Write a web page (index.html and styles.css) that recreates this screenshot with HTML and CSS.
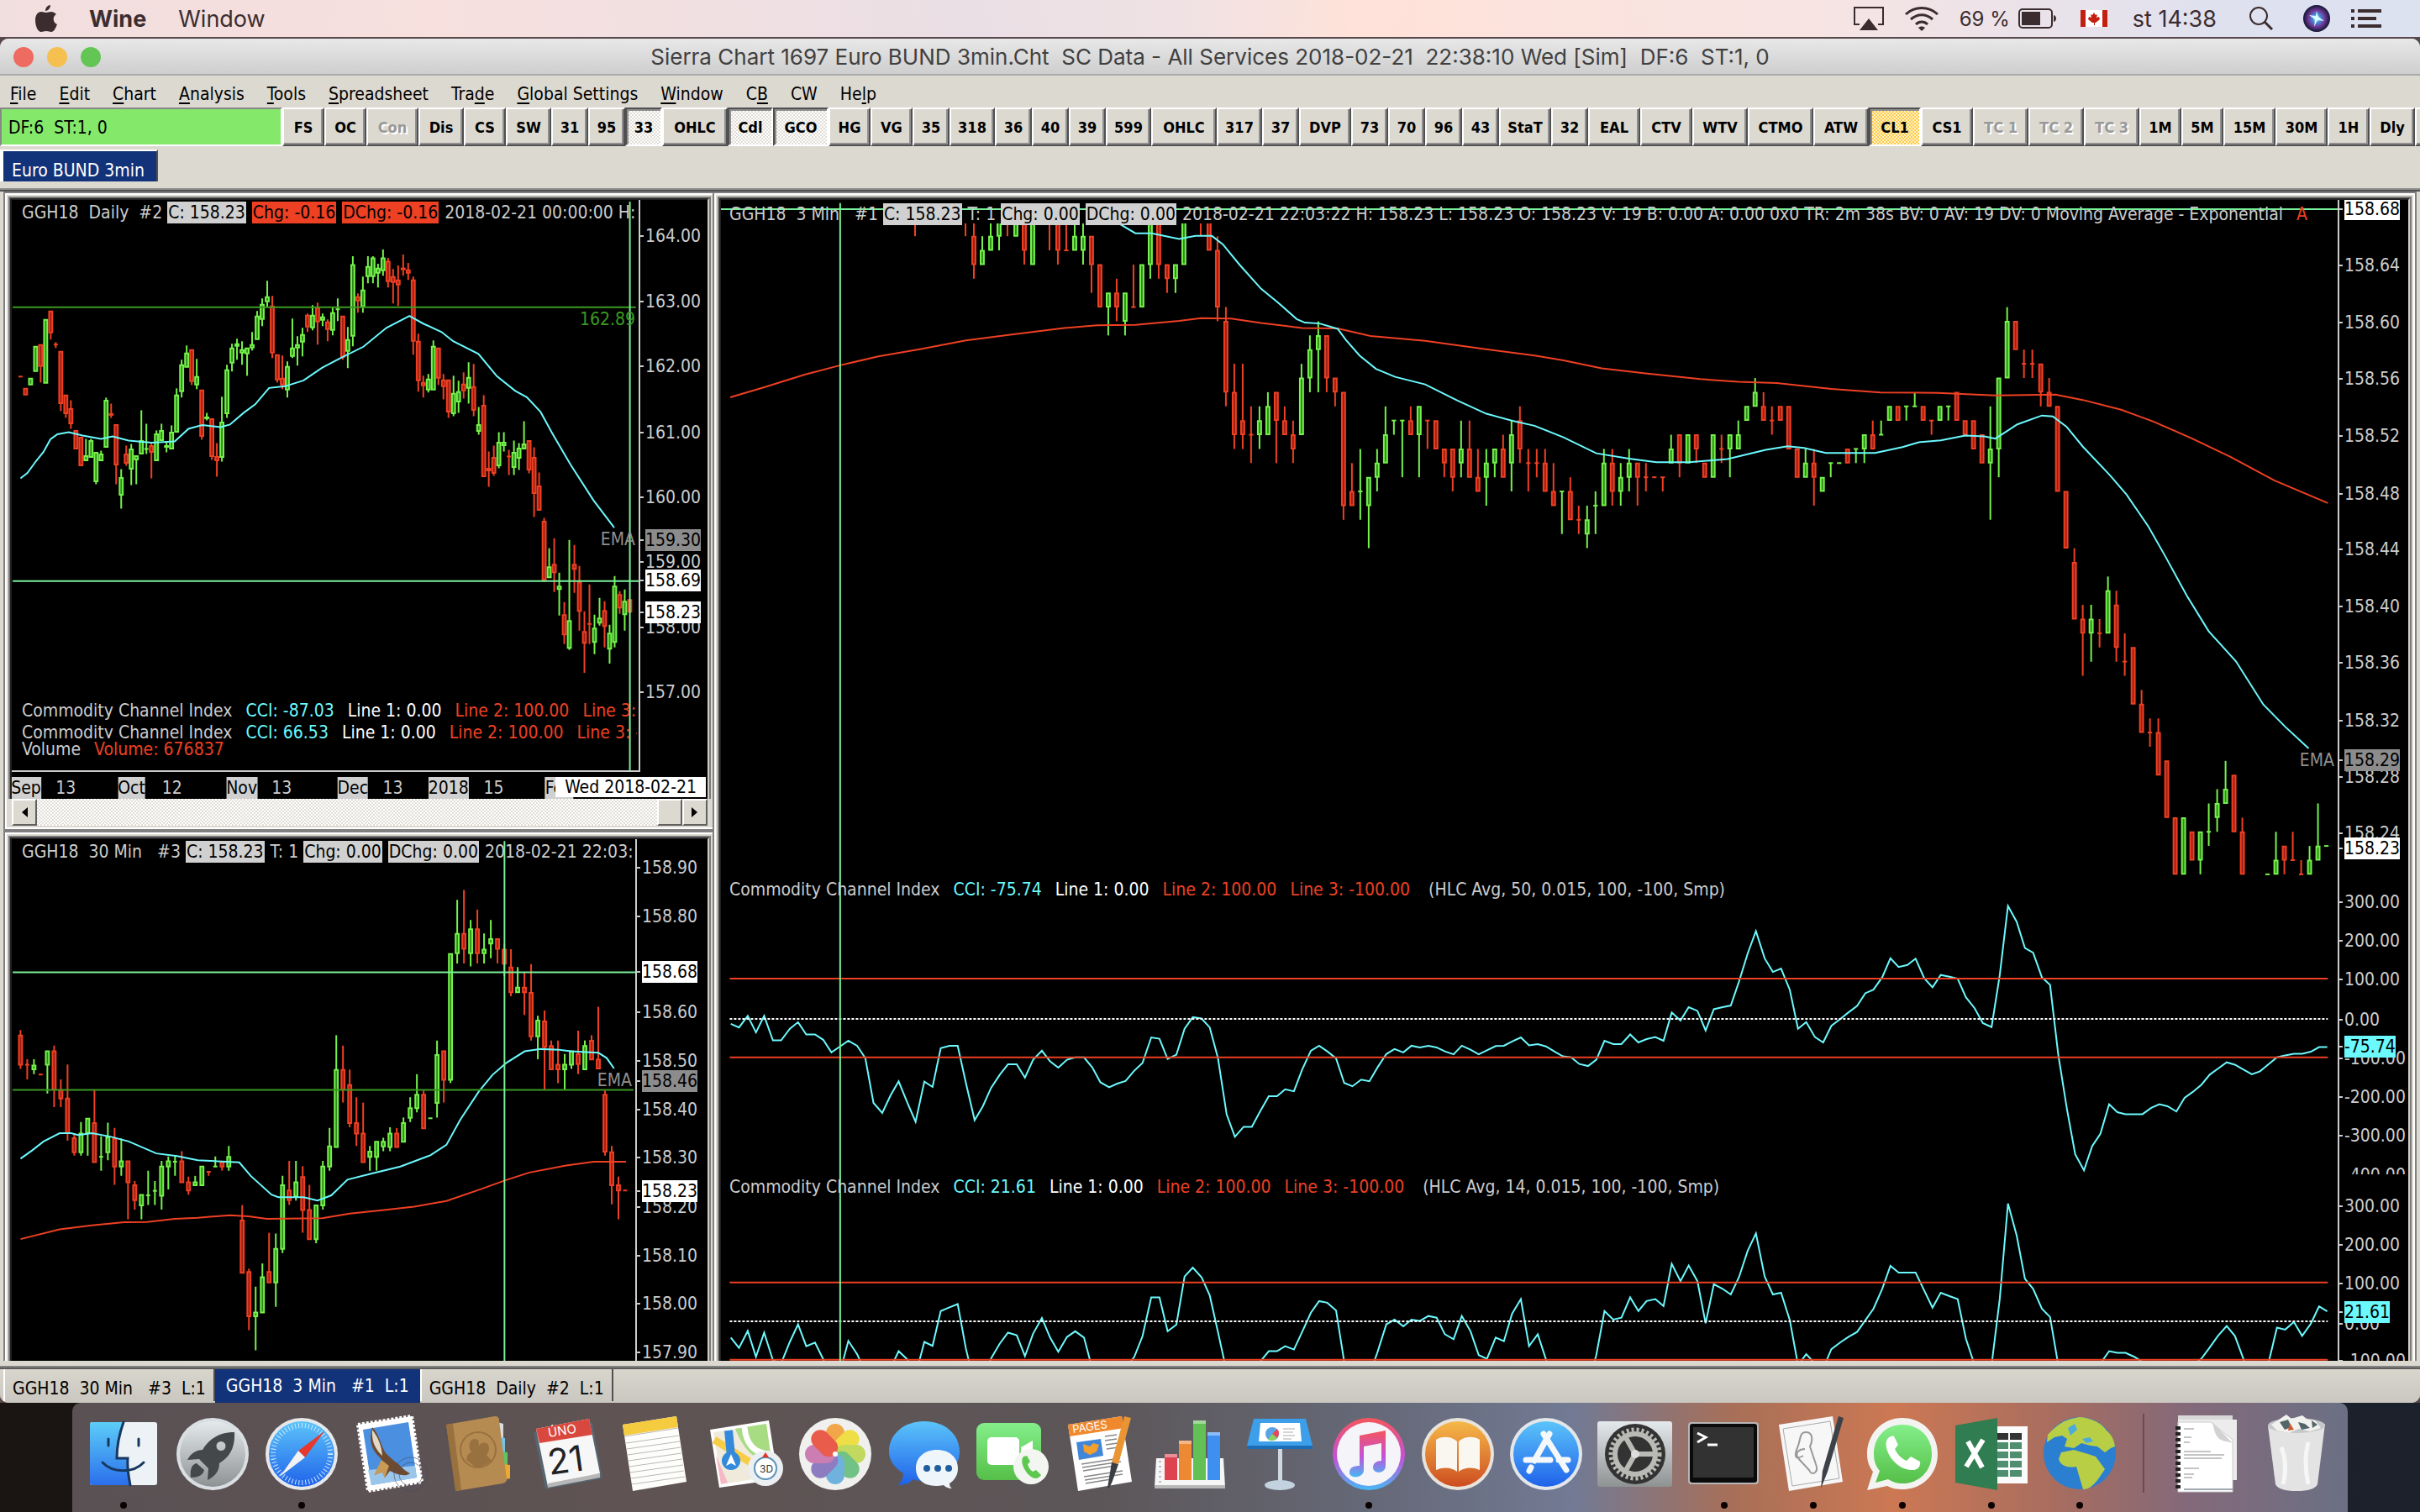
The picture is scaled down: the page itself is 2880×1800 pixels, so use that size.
FILE: index.html
```html
<!DOCTYPE html>
<html lang="en">
<head>
    <meta charset="UTF-8">
    <meta name="viewport" content="width=device-width, initial-scale=1.0">
    <title>Sierra Chart 1697 Euro BUND 3min.Cht</title>
    <link rel="stylesheet" href="styles.css">
</head>
<body>
    <!-- System menu bar -->
    <header class="menubar">
        <button class="apple" aria-label="Apple menu">
            <svg width="26" height="32" viewBox="0 0 26 32"><path d="M18 0c0 4-3 7-6 7 0-4 3-7 6-7zM13 9c2 0 3-1 6-1 2 0 4 1 6 3-5 3-4 10 1 12-2 5-4 9-7 9-2 0-3-1-6-1s-4 1-6 1C3 32 0 25 0 18 0 12 3 8 7 8c3 0 4 1 6 1z"/></svg>
        </button>
        <button class="app-name">Wine</button>
        <button>Window</button>
        <div class="status">
            <svg width="36" height="30" viewBox="0 0 36 30"><path class="line" d="M7 22H1V2h34v20h-6"/><path d="M18 15l11 14H7z"/></svg>
            <svg width="42" height="30" viewBox="0 0 42 30"><path class="line thick" d="M2 10c11-10 27-10 38 0M8 16c8-7 18-7 26 0M14 22c4-4 10-4 14 0"/><path d="M21 30l-4-4c2-2 6-2 8 0z"/></svg>
            <span class="charge">69 %</span>
            <svg width="46" height="26" viewBox="0 0 46 26"><rect class="line" x="1" y="2" width="39" height="22" rx="4"/><rect x="4" y="5" width="22" height="16"/><path d="M42 9c4 1 4 7 0 8z"/></svg>
            <svg class="flag" width="32" height="20" viewBox="0 0 32 20"><rect width="32" height="20" fill="#fff"/><path fill="#c3200f" d="M0 0h6v20H0zM26 0h6v20h-6zM16 3l2 3 2-1-1 4 3-1 1 3-5 4h-1v3h-1v-3h-2l-5-4 1-3 3 1-1-4 2 1z"/></svg>
            <span class="clock">st 14:38</span>
            <svg class="find" width="30" height="30" viewBox="0 0 30 30"><circle class="line" cx="12" cy="12" r="10"/><path class="line thick" d="M19 19l9 9"/></svg>
            <svg width="34" height="34" viewBox="0 0 34 34"><defs><radialGradient id="siri"><stop offset="0" stop-color="#e8ffff"/><stop offset=".3" stop-color="#3f8fd8"/><stop offset=".6" stop-color="#713a9c"/><stop offset="1" stop-color="#10152f"/></radialGradient></defs><circle cx="17" cy="17" r="16" fill="url(#siri)"/><path d="M17 8l2 7 7 5-8-1-4 8 1-9-7-5 8 1z" fill="#d8fbff"/></svg>
            <svg width="36" height="22" viewBox="0 0 36 22"><path d="M0 0h4v4H0zM8 0h28v4H8zM0 9h4v4H0zM8 9h22v4H8zM0 18h4v4H0zM8 18h28v4H8z"/></svg>
        </div>
    </header>

    <main class="window">
        <div class="titlebar">
            <div class="lights"><button class="red" aria-label="Close"></button><button class="yellow" aria-label="Minimize"></button><button class="green" aria-label="Zoom"></button></div>
            <h1>Sierra Chart 1697 Euro BUND 3min.Cht&nbsp; SC Data - All Services 2018-02-21&nbsp; 22:38:10 Wed [Sim]&nbsp; DF:6&nbsp; ST:1, 0</h1>
        </div>

        <nav class="menu">
            <button><u>F</u>ile</button>
            <button><u>E</u>dit</button>
            <button><u>C</u>hart</button>
            <button><u>A</u>nalysis</button>
            <button><u>T</u>ools</button>
            <button><u>S</u>preadsheet</button>
            <button>Tra<u>d</u>e</button>
            <button><u>G</u>lobal Settings</button>
            <button><u>W</u>indow</button>
            <button>C<u>B</u></button>
            <button>CW</button>
            <button>He<u>l</u>p</button>
        </nav>

        <div class="toolbar">
            <div class="feed">DF:6&nbsp; ST:1, 0</div>
            <div class="tools" id="tools"></div>
        </div>

        <div class="books"><button class="book">Euro BUND 3min</button></div>

        <div class="workspace">
            <div class="side">
                <!-- #2 daily -->
                <section class="pane daily">
                    <div class="chart">
                        <div class="row">
                            <div class="plot" id="daily"></div>
                            <div class="axis" id="daily-axis"></div>
                            <p class="legend">GGH18&nbsp; Daily&nbsp; #2 <b class="tag">C: 158.23</b> <b class="tag down">Chg: -0.16</b> <b class="tag down">DChg: -0.16</b> 2018-02-21 00:00:00 H:</p>
                            <div class="studies">
                                <p>Commodity Channel Index&nbsp; <b class="cyan">CCI: -87.03</b>&nbsp; <b class="white">Line 1: 0.00</b>&nbsp; <b class="red-text">Line 2: 100.00</b>&nbsp; <b class="red-text">Line 3: -100.00</b></p>
                                <p class="short">Commodity Channel Index&nbsp; <b class="cyan">CCI: 66.53</b>&nbsp; <b class="white">Line 1: 0.00</b>&nbsp; <b class="red-text">Line 2: 100.00</b>&nbsp; <b class="red-text">Line 3: -100.00</b></p>
                                <p>Volume&nbsp; <b class="red-text">Volume: 676837</b></p>
                            </div>
                        </div>
                        <div class="dates" id="dates"></div>
                    </div>
                    <div class="scroll">
                        <button aria-label="Scroll left"><svg width="8" height="12" viewBox="0 0 8 12"><path d="M8 0v12L1 6z"/></svg></button>
                        <span class="thumb"></span>
                        <button aria-label="Scroll right"><svg width="8" height="12" viewBox="0 0 8 12"><path d="M0 0v12l7-6z"/></svg></button>
                    </div>
                </section>

                <!-- #3 30 min -->
                <section class="pane half cut">
                    <div class="chart">
                        <div class="row">
                            <div class="plot" id="half"></div>
                            <div class="axis" id="half-axis"></div>
                            <p class="legend">GGH18&nbsp; 30 Min&nbsp;&nbsp; #3 <b class="tag">C: 158.23</b> T: 1 <b class="tag">Chg: 0.00</b> <b class="tag">DChg: 0.00</b> 2018-02-21 22:03:</p>
                        </div>
                    </div>
                </section>
            </div>

            <!-- #1 3 min -->
            <section class="pane three cut">
                <div class="chart">
                    <div class="row price">
                        <div class="plot" id="three"></div>
                        <div class="axis" id="three-axis"></div>
                        <p class="legend">GGH18&nbsp; 3 Min&nbsp;&nbsp; #1 <b class="tag">C: 158.23</b> T: 1 <b class="tag">Chg: 0.00</b> <b class="tag">DChg: 0.00</b> 2018-02-21 22:03:22 H: 158.23 L: 158.23 O: 158.23 V: 19 B: 0.00 A: 0.00 0x0 TR: 2m 38s BV: 0 AV: 19 DV: 0 Moving Average - Exponential&nbsp; <b class="red-text">A</b></p>
                    </div>
                    <div class="row cci-slow">
                        <div class="plot" id="slow"></div>
                        <div class="axis" id="slow-axis"></div>
                        <p class="legend">Commodity Channel Index&nbsp; <b class="cyan">CCI: -75.74</b>&nbsp; <b class="white">Line 1: 0.00</b>&nbsp; <b class="red-text">Line 2: 100.00</b>&nbsp; <b class="red-text">Line 3: -100.00</b>&nbsp;&nbsp; <b>(HLC Avg, 50, 0.015, 100, -100, Smp)</b></p>
                    </div>
                    <div class="row cci-fast">
                        <div class="plot" id="fast"></div>
                        <div class="axis" id="fast-axis"></div>
                        <p class="legend">Commodity Channel Index&nbsp; <b class="cyan">CCI: 21.61</b>&nbsp; <b class="white">Line 1: 0.00</b>&nbsp; <b class="red-text">Line 2: 100.00</b>&nbsp; <b class="red-text">Line 3: -100.00</b>&nbsp;&nbsp; <b>(HLC Avg, 14, 0.015, 100, -100, Smp)</b></p>
                    </div>
                </div>
            </section>
        </div>

        <footer class="tabs">
            <button>GGH18&nbsp; 30 Min&nbsp;&nbsp; #3&nbsp; L:1</button>
            <button class="active">GGH18&nbsp; 3 Min&nbsp;&nbsp; #1&nbsp; L:1</button>
            <button>GGH18&nbsp; Daily&nbsp; #2&nbsp; L:1</button>
        </footer>
    </main>

    <!-- Dock -->
    <div class="desktop">
        <div class="dock">
            <button class="open" aria-label="Finder"><svg viewBox="0 0 96 96"><defs><linearGradient id="fi" x2="0" y2="1"><stop stop-color="#5ccdf8"/><stop offset="1" stop-color="#2b6fec"/></linearGradient><linearGradient id="sil" x2="0" y2="1"><stop stop-color="#e4e9ec"/><stop offset="1" stop-color="#8f9293"/></linearGradient><linearGradient id="blu" x2="0" y2="1"><stop stop-color="#5cc4fa"/><stop offset="1" stop-color="#1f62ea"/></linearGradient><linearGradient id="grn" x2="0" y2="1"><stop stop-color="#84ef8a"/><stop offset="1" stop-color="#55bf48"/></linearGradient><linearGradient id="ora" x2="0" y2="1"><stop stop-color="#f6b948"/><stop offset="1" stop-color="#cd4d20"/></linearGradient><linearGradient id="pnk" x2="0" y2="1"><stop stop-color="#f5565a"/><stop offset=".55" stop-color="#c650d8"/><stop offset="1" stop-color="#46b8f5"/></linearGradient></defs><rect x="8" y="10" width="80" height="75" rx="3" fill="#edf2f7"/><path d="M11 10h37c-5 14-8 27-8 43h13c-1 12 1 22 3 32H11q-3 0-3-3V13q0-3 3-3z" fill="url(#fi)"/><path d="M48 10c-5 14-8 27-8 43h13c-1 12 1 22 3 32M30 30v8M66 30v8M23 58c12 13 37 13 49 0" fill="none" stroke="#17385f" stroke-width="3" stroke-linecap="round"/></svg></button>
            <button aria-label="Launchpad"><svg viewBox="0 0 96 96"><circle cx="48" cy="48" r="43" fill="#d9dfe2"/><circle cx="48" cy="48" r="39" fill="url(#sil)"/><path fill="#44484b" fill-rule="evenodd" d="M74 22c-19 0-31 9-38 21-7 0-14 4-18 12l14-1 11 11-1 14c9-4 14-11 14-20 13-8 19-19 18-37zM58 33a5.500 5.500 0 1 1 0 11a5.500 5.500 0 0 1 0-11zM29 59c-6 1-8 8-7 17 9 0 15-3 16-9z"/></svg></button>
            <button class="open" aria-label="Safari"><svg viewBox="0 0 96 96"><circle cx="48" cy="48" r="43" fill="#e6e8ea"/><circle cx="48" cy="48" r="39" fill="url(#blu)"/><circle cx="48" cy="48" r="34" fill="none" stroke="#cfeaff" stroke-width="6" stroke-dasharray="1 3"/><path d="M75 21L52 52l-8-8z" fill="#e8382c"/><path d="M22 75l22-31 8 8z" fill="#f2f2f2"/></svg></button>
            <button aria-label="Mail"><svg viewBox="0 0 96 96"><path d="M10 13l64-10 12 78-64 11z" fill="#fff" stroke="#fff" stroke-width="4" stroke-dasharray="3 2"/><path d="M16 19l54-9 10 66-54 9z" fill="#4b8fe0"/><path d="M22 67l56-5 2 14-54 9z" fill="#9bc6ec"/><path d="M27 16c-4 14-2 26 9 36 3 3 3 6 2 9l-8 12 9-4 3 7 6-8c8 4 18 8 24 3-9-4-12-11-18-14l-10-9c-7-9-8-23-17-32z" fill="#6d4b31"/><path d="M27 19c-1 13 3 23 12 31-1-12-5-22-12-31z" fill="#e2d8c8"/><path d="M38 55l-9 18 10-3 3 6 5-14z" fill="#c99a55"/><g fill="none" stroke="#414c60" opacity=".6"><circle cx="73" cy="72" r="20"/><circle cx="73" cy="72" r="14"/></g></svg></button>
            <button aria-label="Contacts"><svg viewBox="0 0 96 96"><path d="M70 10l7 2v18h-7z" fill="#dcdcdc"/><path d="M72 28l7 1v17h-7z" fill="#72c5e5"/><path d="M74 45l8 1v15h-8z" fill="#5fc65f"/><path d="M76 60l9 1v16l-9 2z" fill="#eda82e"/><path d="M9 13l58-10q5 0 5 5l9 70q0 4-5 5l-55 9z" fill="#b68b52"/><path d="M9 13l8-1 10 79-7 1z" fill="#99713e"/><circle cx="47" cy="43" r="21" fill="none" stroke="#997140" stroke-width="2"/><path d="M33 55q1-8 6-9c-5-8-2-16 4-16 5 0 6 4 4 10 2-7 13-8 13 1 0 4-1 6-3 8l6 7q-11 9-20 7z" fill="#997140"/></svg></button>
            <button aria-label="Calendar"><svg viewBox="0 0 96 96"><path d="M7 22l70-12 12 67-68 13z" fill="#56656f"/><path d="M10 18l63-12 13 65-62 16z" fill="#f7f7f7"/><path d="M10 18l63-12 4 19-63 10z" fill="#d9483e"/><path d="M24 83l62-12v5l-62 12z" fill="#b7b7b7"/><text x="25" y="28" class="cal-month" transform="rotate(-9 25 28)">ÚNO</text><text x="26" y="73" class="cal-day" transform="rotate(-8 26 73)">21</text></svg></button>
            <button aria-label="Notes"><svg viewBox="0 0 96 96"><path d="M7 13l64-10 12 78-64 11z" fill="#fdfdfb"/><path d="M7 13l64-10 2 13-64 10z" fill="#f5cb3f"/><path d="M9 27l64-10M11 35l63-9M12 42l63-9M13 49l63-9M14 56l63-9M15 63l63-9M16 70l63-9M17 77l63-9M18 84l63-9" stroke="#b9b9b5"/></svg></button>
            <button aria-label="Maps"><svg viewBox="0 0 96 96"><path d="M5 19l70-11 11 70-70 10z" fill="#fff"/><path d="M9 22l63-10 9 62-62 10z" fill="#efeadc"/><path d="M35 18l37-6 6 43c-18 0-30-6-43-37z" fill="#a8dc83"/><path d="M46 16c2 22 13 31 30 32" fill="none" stroke="#fff" stroke-width="7"/><path d="M10 31l70 44" stroke="#f7cd48" stroke-width="9"/><path d="M12 49l14 33-8 2z" fill="#f5b9c5"/><path d="M27 20l3 30" stroke="#3389dc" stroke-width="10"/><circle cx="30" cy="56" r="11" fill="#3389dc"/><path d="M30 48l6 14-6-3-6 3z" fill="#fff"/><circle cx="71" cy="65" r="21" fill="#eceff1"/><circle cx="71" cy="65" r="13" fill="#fff" stroke="#5c93b8" stroke-width="2"/><path d="M71 46l4 6h-8z" fill="#e93222"/><text x="64" y="70" class="tiny">3D</text></svg></button>
            <button aria-label="Photos"><svg viewBox="0 0 96 96"><circle cx="48" cy="48" r="43" fill="#f0f0ee"/><g opacity=".85"><rect x="37" y="12" width="22" height="36" rx="11" fill="#f29a2e"/><rect x="37" y="12" width="22" height="36" rx="11" fill="#f1dc2b" transform="rotate(45 48 48)"/><rect x="37" y="12" width="22" height="36" rx="11" fill="#b8d645" transform="rotate(90 48 48)"/><rect x="37" y="12" width="22" height="36" rx="11" fill="#5bbb72" transform="rotate(135 48 48)"/><rect x="37" y="12" width="22" height="36" rx="11" fill="#5aa8dc" transform="rotate(180 48 48)"/><rect x="37" y="12" width="22" height="36" rx="11" fill="#7d68b8" transform="rotate(225 48 48)"/><rect x="37" y="12" width="22" height="36" rx="11" fill="#c66aa8" transform="rotate(270 48 48)"/><rect x="37" y="12" width="22" height="36" rx="11" fill="#e8432f" transform="rotate(315 48 48)"/></g><circle cx="48" cy="48" r="3" fill="#fff"/></svg></button>
            <button aria-label="Messages"><svg viewBox="0 0 96 96"><path d="M48 9c24 0 42 15 42 36S72 80 48 80c-5 0-9 0-13-2-5 5-11 7-18 7 4-5 6-9 6-14C12 64 6 55 6 45 6 24 24 9 48 9z" fill="url(#blu)"/><path d="M63 43c15 0 25 9 25 22 0 8-4 14-10 18 0 3 1 5 3 6-5 0-8-2-10-4-20 4-33-5-33-20 0-13 10-22 25-22z" fill="#eef5fb"/><circle cx="51" cy="65" r="4" fill="#205d9f"/><circle cx="64" cy="65" r="4" fill="#205d9f"/><circle cx="77" cy="65" r="4" fill="#205d9f"/></svg></button>
            <button aria-label="FaceTime"><svg viewBox="0 0 96 96"><rect x="5" y="11" width="77" height="68" rx="9" fill="url(#grn)"/><rect x="18" y="28" width="38" height="33" rx="5" fill="#fff"/><path d="M58 40l14-8v27l-14-8z" fill="#fff"/><circle cx="70" cy="63" r="21" fill="#f3f5f1"/><path d="M61 51c-6 7 5 25 14 26 3 0 6-2 7-4l-6-6-4 2c-3-2-5-5-6-9l3-3-4-7z" fill="#5cc84e"/></svg></button>
            <button aria-label="Pages"><svg viewBox="0 0 96 96"><path d="M8 13l64-10 12 78-64 11z" fill="#fff"/><path d="M8 13l64-10 3 14-65 10z" fill="#f0892e"/><text x="14" y="23" class="pages" transform="rotate(-8 14 23)">PAGES</text><path d="M18 34l29-4 3 20-29 5z" fill="#4286d9"/><path d="M26 36l8 3 4-4 7 2-3 8-8 4-7-4z" fill="#f5a02e"/><path d="M52 27l14-2M52 32l14-2M53 37l14-2M54 42l14-2M24 60l46-7M25 64l46-7M26 68l38-6M27 75l46-7M28 79l45-7M29 83l30-5" stroke="#888" stroke-width="1.500"/><path d="M75 3l8 2-15 55-8-2z" fill="#e99533"/><path d="M60 58l8 2-7 20-4 9-2-1z" fill="#3b3e42"/></svg></button>
            <button aria-label="Numbers"><svg viewBox="0 0 96 96"><path d="M7 53h80l2 34H5z" fill="#f6f6f6"/><path d="M5 85h84v4H5z" fill="#b8b8b8"/><rect x="17" y="48" width="15" height="31" fill="#dd4450"/><rect x="34" y="32" width="15" height="47" fill="#ee8933"/><rect x="51" y="8" width="15" height="71" fill="#62c055"/><rect x="68" y="22" width="15" height="57" fill="#3f8ff0"/><path d="M17 48h15v4H17zM34 32h15v4H34zM51 8h15v4H51zM68 22h15v4H68z" fill="#fff" opacity=".4"/><path d="M10 57h3M10 63h3M10 69h3M10 75h3M10 81h3" stroke="#888"/></svg></button>
            <button aria-label="Keynote"><svg viewBox="0 0 96 96"><path d="M46 40h5v48h-5z" fill="#cfd8de"/><ellipse cx="48" cy="85" rx="18" ry="6" fill="#c3d2df"/><path d="M17 6h62l8 32v4H9v-4z" fill="#3d9eea"/><path d="M9 38h78v4H9z" fill="#1d6db4"/><path d="M25 11h47l2 22H23z" fill="#fff"/><circle cx="39" cy="24" r="8" fill="#58a4e8"/><path d="M39 24l6-6q4 5 0 11z" fill="#e7475a"/><path d="M39 24l6 5q-5 5-11 2z" fill="#8bd35c"/><path d="M52 18h14M52 22h12M52 26h14M52 30h10" stroke="#aaa"/></svg></button>
            <button class="open" aria-label="iTunes"><svg viewBox="0 0 96 96"><circle cx="48" cy="48" r="43" fill="url(#pnk)"/><circle cx="48" cy="48" r="38" fill="#f4f4f9"/><path d="M37 26l31-6v42c0 10-15 10-15 2 0-5 4-8 10-8V35l-21 4v28c0 10-17 11-17 3 0-6 5-8 12-8z" fill="url(#pnk)"/></svg></button>
            <button aria-label="iBooks"><svg viewBox="0 0 96 96"><circle cx="48" cy="48" r="43" fill="#e8e3dd"/><circle cx="48" cy="48" r="39" fill="url(#ora)"/><path d="M47 33c-6-6-18-7-25-2v36c9-4 19-3 25 2zM49 33c6-6 18-7 25-2v36c-9-4-19-3-25 2z" fill="#faf7f1"/></svg></button>
            <button aria-label="App Store"><svg viewBox="0 0 96 96"><circle cx="48" cy="48" r="43" fill="#e4e7ea"/><circle cx="48" cy="48" r="39" fill="url(#blu)"/><path d="M52 24L34 56M45 24l27 43M24 55h29M63 55h11M30 64l-2 4" stroke="#f5f8fb" stroke-width="7" stroke-linecap="round"/></svg></button>
            <button aria-label="System Preferences"><svg viewBox="0 0 96 96"><rect x="3" y="9" width="89" height="78" rx="3" fill="url(#sil)"/><circle cx="48" cy="48" r="36" fill="#333"/><circle cx="48" cy="48" r="29" fill="none" stroke="#b9b9b5" stroke-width="5" stroke-dasharray="3 3"/><circle cx="48" cy="48" r="24" fill="none" stroke="#b9b9b5" stroke-width="6"/><path d="M48 48h24M48 48L36 27M48 48L36 69" stroke="#b9b9b5" stroke-width="6"/><circle cx="48" cy="48" r="5" fill="#ddd"/></svg></button>
            <button class="open" aria-label="Terminal"><svg viewBox="0 0 96 96"><rect x="5" y="10" width="84" height="74" rx="4" fill="#b7b7b7"/><rect x="7" y="12" width="80" height="70" rx="3" fill="#0b0b0b"/><rect x="11" y="16" width="72" height="60" fill="#323232"/><path d="M16 23l10 5-10 6M28 37h12" fill="none" stroke="#fff" stroke-width="3"/></svg></button>
            <button class="open" aria-label="Script Editor"><svg viewBox="0 0 96 96"><path d="M7 13l64-10 12 78-64 11z" fill="#f7f7f7"/><path d="M12 18l56-9 11 68-56 9z" fill="none" stroke="#aaa"/><path d="M36 50c-12 7-10-3-6-12 3-9 2-16 9-16 8 0 9 8 5 17l7 21c4 10-5 15-8 7l-13-14c-5-7 2-11 8-11" fill="none" stroke="#999" stroke-width="2"/><path d="M78 3l6 2-19 64-8 20 2-21z" fill="#3d4248"/></svg></button>
            <button class="open" aria-label="WhatsApp"><svg viewBox="0 0 96 96"><path d="M48 5c24 0 42 19 42 43S72 90 48 90c-7 0-12-1-18-4L6 91l7-22C8 62 6 56 6 48 6 24 24 5 48 5z" fill="#f3f4f2"/><path d="M48 13c20 0 35 15 35 35S68 83 48 83c-7 0-12-2-17-5l-15 4 5-14c-5-6-7-12-7-20 0-20 14-35 34-35z" fill="url(#grn)"/><path d="M31 29c-9 10 8 40 31 38 5-1 8-5 7-10l-11-6-5 5c-7-3-11-8-14-14l4-5-5-10c-2-1-5 0-7 2z" fill="#fff"/></svg></button>
            <button class="open" aria-label="Excel"><svg viewBox="0 0 96 96"><path d="M54 15h37v68H54z" fill="#fbfbfb"/><path d="M55 23h13v8H55zM70 23h14v8H70z" fill="#333"/><path d="M55 34h13v8H55zM70 34h14v8H70zM55 45h13v8H55zM70 45h14v8H70zM55 56h13v8H55zM70 56h14v8H70zM55 67h13v8H55zM70 67h14v8H70z" fill="#4f8f70"/><path d="M5 14l50-9v86L5 82z" fill="#2f7d50"/><path d="M20 33l17 31M38 31L18 63" stroke="#fff" stroke-width="6"/></svg></button>
            <button class="open" aria-label="Globe"><svg viewBox="0 0 96 96"><circle cx="48" cy="47" r="43" fill="#2a7fd0"/><path d="M10 25c8-8 16-18 38-21 14 1 26 7 32 16 7 6 9 12 10 19l-5 2-7 5-9-7-8-1-11-3-9 6-11-2 3-9-6-4-9 2-9 6z" fill="#b8cf45"/><path d="M26 46l15-3 17 5 9 3 11 15c-7 10-14 24-26 24l-8-27c-10 2-19-1-21-9z" fill="#b8cf45"/><path d="M34 17l8-5 3 7-8 7zM51 30l9-2 4 5-8 2z" fill="#4eabd9"/></svg></button>
            <span class="divider"></span>
            <button aria-label="Documents"><svg viewBox="0 0 96 96"><path d="M13 2h65v80H13z" fill="#d8d8d8"/><path d="M13 7h70v72H13z" fill="#ececec"/><path d="M13 10h39l26 21v62H13z" fill="#fff" stroke="#ccc"/><path d="M54 10l24 25c-12-4-20 0-24-25z" fill="#d2d2d2"/><path d="M13 15v76" stroke="#222" stroke-width="6" stroke-dasharray="4 3"/><path d="M20 18h12M20 28h9M20 34h7M20 45h32M20 49h48M20 53h45M20 65h18M20 72h12M20 76h10" stroke="#8a8a8a"/><path d="M20 90h58" stroke="#456"/></svg></button>
            <button aria-label="Trash"><svg viewBox="0 0 96 96"><path d="M14 14l68-2-9 72q-4 8-25 8t-25-8z" fill="#e3e3e4"/><ellipse cx="48" cy="14" rx="34" ry="9" fill="#c5c8ca"/><path d="M18 13l12-8 6-4 6 5 13-4 6 5 9 1 7 9-13 4-13-3-12 5-14-3z" fill="#f1f1ee"/><path d="M28 10l10-3 4 9-8 3zM50 10l8 2 6 5-10 2zM66 8l7 5-6 4z" fill="#53666a"/><path d="M40 11l5 8-7 1z" fill="#d0582c"/><path d="M30 40q8 20 2 44M62 34q-6 22 0 50" stroke="#f6f6f6" stroke-width="5" fill="none"/></svg></button>
        </div>
    </div>

    <script src="charts.js"></script>
</body>
</html>
```

FILE: styles.css
```css
* {
    margin: 0;
    padding: 0;
    box-sizing: border-box;
}

body {
    display: flex;
    flex-direction: column;
    height: 100vh;
    overflow: hidden;
    background: #57484c;
    font-family: "DejaVu Sans Condensed", "Noto Sans", sans-serif;
    font-size: 21px;
    color: #000;
}

button {
    border: none;
    background: none;
    font: inherit;
    color: inherit;
    white-space: nowrap;
}

b {
    font-weight: normal;
}

svg {
    display: block;
}

/* system menu bar */
.menubar {
    display: flex;
    align-items: center;
    gap: 38px;
    height: 44px;
    padding: 0 46px 0 42px;
    background: linear-gradient(to right, #f1dede, #f7e0de 18%, #eadfe5 40%, #f0e2e4 49%, #ffe2d9 56%, #f7e4e3 75%, #dfe1ef 92%, #dce2f0);
    font-family: Inter, sans-serif;
    font-size: 27px;
    color: #3b2d2f;
    fill: #3b2d2f;
}

.app-name {
    font-weight: bold;
}

.status {
    display: flex;
    align-items: center;
    margin-left: auto;
    gap: 24px;
}

.charge {
    font-size: 24px;
    margin-right: -14px;
}

.flag {
    margin-left: 4px;
}

.clock {
    margin-left: 6px;
}

.find {
    margin: 0 10px 0 14px;
}

.line {
    fill: none;
    stroke: #3b2d2f;
    stroke-width: 2;
}

.thick {
    stroke-width: 3;
}

/* application window */
.window {
    flex: 1;
    min-height: 0;
    display: flex;
    flex-direction: column;
    margin-top: 2px;
    border-radius: 10px;
    overflow: hidden;
    background: #dcd9d1;
}

.titlebar {
    position: relative;
    height: 44px;
    border-bottom: 2px solid #aaa;
    background: linear-gradient(#e8e8e8, #cecece);
    text-align: center;
}

.titlebar h1 {
    font: 26px/44px Inter, sans-serif;
    color: #404040;
}

.lights {
    position: absolute;
    left: 16px;
    top: 10px;
    display: flex;
    gap: 16px;
}

.lights button {
    width: 24px;
    height: 24px;
    border-radius: 50%;
}

.lights .red { background: #ed6b60; }
.lights .yellow { background: #f5c04f; }
.lights .green { background: #62c554; }

.menu {
    display: flex;
    gap: 27px;
    height: 38px;
    padding: 6px 12px 0;
}

.menu u {
    text-underline-offset: 3px;
}

.toolbar {
    display: flex;
    height: 46px;
}

.feed {
    width: 336px;
    padding-left: 8px;
    border: 2px solid #fff;
    border-top-color: #888;
    border-left-color: #888;
    background: #84e86b;
    line-height: 44px;
}

.tools {
    flex: 1;
    display: flex;
    overflow: hidden;
}

.tools button {
    flex: none;
    width: 44px;
    border: 2px solid #fff;
    border-right-color: #505050;
    border-bottom-color: #505050;
    box-shadow: inset -2px -2px #8f8f8f;
    font-weight: bold;
    font-size: 18px;
}

.tools .w50 { width: 50px; }
.tools .w54 { width: 54px; }
.tools .w62 { width: 62px; }
.tools .w66 { width: 66px; }
.tools .w78 { width: 78px; }

.tools .pressed,
.tools .lit {
    border-color: #505050 #fff #fff #505050;
    box-shadow: inset 2px 2px #8f8f8f;
    background: repeating-conic-gradient(#fff 0 25%, #e0ddd6 0 50%) 0 0 / 4px 4px;
}

.tools .lit {
    background: repeating-conic-gradient(#fff4c8 0 25%, #ffc94a 0 50%) 0 0 / 4px 4px;
}

.tools button:disabled {
    color: #999;
    text-shadow: 2px 2px #fff;
}

.books {
    height: 52px;
    padding-top: 4px;
}

.book {
    height: 38px;
    padding: 10px 14px 0 10px;
    border: solid #fff;
    border-width: 2px 2px 0 4px;
    border-right-color: #505050;
    background: #12337a;
    color: #fff;
    line-height: 26px;
}

/* chart panes */
.workspace {
    flex: 1;
    min-height: 0;
    display: grid;
    grid-template-columns: 844fr 2024fr;
    padding: 2px 6px 0;
    border-top: 2px solid #505050;
    box-shadow: 0 -2px #8f8f8f;
    overflow: hidden;
}

.side {
    display: grid;
    grid-template-rows: 756fr 628fr;
    gap: 4px;
    min-width: 0;
    min-height: 0;
}

.pane {
    display: flex;
    flex-direction: column;
    min-width: 0;
    min-height: 0;
    padding: 2px;
    border: 2px solid #fff;
    outline: 2px solid #808080;
}

.chart {
    flex: 1;
    min-height: 0;
    display: flex;
    flex-direction: column;
    border: 4px ridge #8f8f8f;
    border-color: #777 #d0cdc6 #d0cdc6 #777;
    background: #000;
    color: #ccc;
}

.daily .chart {
    border-bottom: none;
}

.cut,
.cut .chart {
    border-bottom: none;
    padding-bottom: 0;
}

.row {
    position: relative;
    flex: 1;
    min-height: 0;
    display: grid;
    grid-template-columns: 1fr 84px;
    overflow: hidden;
}

.daily .row {
    grid-template-columns: 1fr 82px;
}

.half .row {
    grid-template-columns: 1fr 86px;
}

.row.price { flex: 806; }
.row.cci-slow { flex: 354; }
.row.cci-fast { flex: 222; }

.plot {
    position: relative;
    min-width: 0;
    overflow: hidden;
}

.daily .plot {
    border-bottom: 2px solid #ccc;
}

.plot svg {
    position: absolute;
    width: 100%;
    height: 100%;
}

.plot svg * {
    vector-effect: non-scaling-stroke;
    fill: none;
    stroke-width: 2;
}

.plot .up { stroke: #75f24c; }
.plot rect.up { fill: #2f8a1a; }
.plot .dn { stroke: #ee4023; }
.plot rect.dn { fill: #a01e12; }
.plot .ema { stroke: #6bf9fd; }
.plot .cross { stroke: #78f09a; }
.plot .level { stroke: #3c9a22; }
.plot .zero { stroke: #fff; stroke-dasharray: 3 2; }

.mark {
    position: absolute;
    right: 4px;
    line-height: 26px;
    margin-top: -13px;
    color: #909090;
}

.mark.green {
    color: #3c9a22;
}

.axis {
    position: relative;
    border-left: 2px solid #ccc;
    overflow: hidden;
}

.axis span {
    position: absolute;
    left: 6px;
    height: 26px;
    margin-top: -12px;
    line-height: 26px;
}

.axis span::before {
    content: "";
    position: absolute;
    left: -6px;
    top: 12px;
    width: 4px;
    height: 2px;
    background: #ccc;
}

.axis .last { background: #fff; color: #000; }
.axis .avg { background: #8c8c8c; color: #000; }
.axis .study { background: #6bf9fd; color: #000; }

.legend {
    position: absolute;
    left: 10px;
    right: 84px;
    top: 2px;
    line-height: 26px;
    white-space: nowrap;
    overflow: hidden;
}

.price .legend {
    top: 4px;
}

.side .legend {
    left: 12px;
}

.tag {
    display: inline-block;
    padding: 0 1px;
    margin-right: 1px;
    background: #d0d0d0;
    color: #000;
}

.legend b:not(.tag),
.studies b {
    margin-left: 4px;
}

.tag.down { background: #ee4023; }
.cyan { color: #6bf9fd; }
.white { color: #fff; }
.red-text { color: #ee4023; }

.studies {
    position: absolute;
    left: 12px;
    right: 84px;
    bottom: 14px;
    line-height: 26px;
    white-space: nowrap;
    overflow: hidden;
}

.studies .short {
    height: 20px;
    overflow: hidden;
}

.dates {
    position: relative;
    height: 32px;
    overflow: hidden;
    white-space: nowrap;
}

.dates span {
    position: absolute;
    top: 6px;
    height: 26px;
    line-height: 26px;
    transform: translateX(-50%);
}

.dates .month {
    background: #d0d0d0;
    color: #000;
}

.dates .today {
    right: 2px;
    height: 24px;
    line-height: 24px;
    padding: 0 11px;
    transform: none;
    background: #fff;
    color: #000;
}

.scroll {
    display: flex;
    height: 32px;
    background: repeating-conic-gradient(#fff 0 25%, #e0ddd6 0 50%) 0 0 / 4px 4px;
    margin: 0 4px;
}

.scroll button,
.thumb {
    display: grid;
    place-items: center;
    width: 30px;
    border: 2px solid #fff;
    border-right-color: #606060;
    border-bottom-color: #606060;
    background: #dcd9d1;
}

.thumb {
    margin-left: auto;
}

/* chart tabs */
.tabs {
    display: flex;
    height: 50px;
    padding: 0 0 0 4px;
    background: linear-gradient(#8f8f8f, #505050) 0 6px / 100% 4px no-repeat, linear-gradient(#dcd9d1, #cac7c0);
}

.tabs button {
    height: 38px;
    margin-top: 10px;
    padding: 7px 9px 0;
    border-left: 2px solid #fff;
    border-right: 2px solid #505050;
    line-height: 26px;
}

.tabs .active {
    height: 40px;
    padding: 0 13px;
    border: none;
    background: #12337a;
    color: #fff;
}

/* dock */
.desktop {
    display: flex;
    height: 130px;
    padding: 0 86px;
    background: linear-gradient(to right, #1a1413, #100d0c 50%, #1c222c);
}

.dock {
    flex: 1;
    display: flex;
    padding: 13px 8px 0;
    border-radius: 10px 10px 0 0;
    background: linear-gradient(to right, #5a5154, #5f5353 25%, #5c5658 45%, #666a7a 58%, #727a94 66%, #a86f58 73%, #cc7853 80%, #a96d5f 87%, #83697a 93%, #6b7084);
}

.dock button {
    position: relative;
    flex: 1;
    min-width: 0;
}

.dock svg {
    width: 96px;
    height: 96px;
    margin: 0 auto;
    position: relative;
    top: -11px;
}

.dock .open::after {
    content: "";
    position: absolute;
    left: 50%;
    bottom: 4px;
    width: 8px;
    height: 8px;
    margin-left: -4px;
    border-radius: 50%;
    background: #0a0000;
}

.divider {
    width: 2px;
    height: 94px;
    margin: 0 22px;
    background: #6b4c49;
}

.cal-month { font: 15px Inter, sans-serif; fill: #fff; }
.cal-day { font: 42px Inter, sans-serif; fill: #222; }
.tiny { font: 12px Inter, sans-serif; fill: #333; }
.pages { font: 13px Inter, sans-serif; fill: #fff; }
```

FILE: charts.js
```js
// toolbar: label, width class, state
const tools = `FS w50|OC w50|Con w62 off|Dis w54|CS w50|SW w54|31|95|33 pressed|OHLC w78|Cdl w54 pressed|GCO w66 pressed|HG w50|VG w50|35|318 w54|36|40|39|599 w54|OHLC w78|317 w54|37|DVP w62|73|70|96|43|StaT w62|32|EAL w62|CTV w62|WTV w66|CTMO w78|ATW w66|CL1 w62 lit|CS1 w62|TC_1 w66 off|TC_2 w66 off|TC_3 w66 off|1M w50|5M w50|15M w62|30M w62|1H w50|Dly w54|`;

document.getElementById('tools').innerHTML = tools.split('|').map(t => {
    const [label, ...cls] = t.split(' ');
    return `<button class="${cls.join(' ')}"${cls.includes('off') ? ' disabled' : ''}>${label.replace('_', ' ')}</button>`;
}).join('');

// one bar: colour, high, body top, body bottom, low (equal top and bottom = doji)
function candle(x, w, cls, h, t, b, l) {
    let s = h < l ? `<path class="${cls}" d="M${x} ${h}V${t}M${x} ${b}V${l}"/>` : '';
    if (t === b) return s + `<path class="${cls}" d="M${x - w / 2 - 1} ${t}h${w + 2}"/>`;
    return s + `<rect class="${cls}" x="${x - w / 2}" y="${t + 1}" width="${w}" height="${b - t - 2}"/>`;
}

function poly(cls, points) {
    return `<polyline class="${cls}" points="${points}"/>`;
}

function hline(cls, x1, x2, y) {
    return `<path class="${cls}" d="M${x1} ${y}H${x2}"/>`;
}

function vline(cls, x, y1, y2) {
    return `<path class="${cls}" d="M${x} ${y1}V${y2}"/>`;
}

// draw a subgraph and its scale; box = [x, y, width, height] in chart units
function draw(id, box, body, labels, marks = []) {
    const pct = y => ((y - box[1]) / box[3] * 100).toFixed(2) + '%';
    document.getElementById(id).innerHTML =
        `<svg viewBox="${box.join(' ')}" preserveAspectRatio="none">${body}</svg>` +
        marks.map(([text, y, cls]) => `<span class="mark ${cls || ''}" style="top:${pct(y)}">${text}</span>`).join('');
    document.getElementById(id + '-axis').innerHTML =
        labels.map(([text, y, cls]) => `<span class="${cls || ''}" style="top:${pct(y)}">${text}</span>`).join('');
}

// bars given as "c high top bottom low", "-" for an empty slot
function bars(text, x0, step, w, map = v => v) {
    return text.trim().split(/\s*,\s*/).map((row, i) => {
        if (row === '-') return '';
        const [c, ...v] = row.split(' ');
        const n = v.map(Number).map(map);
        if (n.length === 1) n.push(n[0], n[0], n[0]);
        return candle(x0 + i * step, w, c === 'g' ? 'up' : 'dn', ...n);
    }).join('');
}

// ---- #2 daily ----
const daily = `r 456,r 484 484 500 500,g 460 460 476 476,g 384 384 444 444,r 380 380 432 470,g 320 320 472 472,r 300 300 352 368,r 374 380 380 388,r 396 396 520 538,r 500 500 544 554,
r 512 532 568 580,r 584 584 628 628,r 600 600 668 668,g 604 644 656 656,g 604 608 648 648,g 636 636 706 712,g 632 640 656 656,g 506 512 624 624,r 520 544 548 554,r 570 570 666 712,
g 676 696 738 770,r 620 640 662 668,g 616 628 676 714,g 644 644 654 712,g 536 608 640 640,g 568 628 628 640,r 612 620 636 698,g 584 592 656 656,g 568 584 608 608,g 612 620 624 636,
g 572 588 628 628,g 484 500 588 588,g 416 428 492 506,g 382 400 434 434,r 392 392 468 476,g 414 456 476 486,r 488 488 598 606,g 542 552 556 560,r 556 556 646 654,r 614 646 656 694,
g 504 564 648 658,g 428 440 544 554,g 378 388 424 444,g 366 378 384 416,g 372 392 400 428,g 388 388 402 454,g 350 380 388 394,g 300 312 368 368,g 270 284 320 336,g 228 266 278 290,
r 264 288 400 412,r 404 404 464 470,r 406 460 476 486,g 420 432 488 506,g 318 388 408 412,g 360 380 388 430,g 340 356 374 408,r 306 310 338 350,g 286 310 340 346,r 280 292 326 380,
g 306 314 322 336,r 320 326 344 372,g 290 304 346 358,g 270 296 296 324,r 312 312 410 416,g 338 368 396 436,g 170 190 360 384,r 258 266 276 304,g 218 250 290 304,g 170 194 218 234,
g 170 174 218 234,g 188 198 210 244,g 154 174 204 216,r 174 182 230 244,r 200 218 232 282,r 192 226 238 288,r 166 198 202 216,r 186 202 210 226,r 218 226 372 404,r 354 372 466 492,
r 454 470 478 506,g 450 462 488 494,g 370 384 488 488,r 388 388 460 476,r 450 464 480 510,r 464 464 540 554,g 454 496 544 550,g 466 492 516 542,r 446 474 490 508,g 422 458 484 520,
r 426 480 536 550,g 528 570 586 594,r 500 524 694 694,r 634 674 680 718,r 620 648 686 692,g 588 612 668 674,g 588 612 620 634,r 630 646 646 690,g 608 636 672 690,g 614 626 650 678,
g 562 616 628 628,r 608 608 678 686,r 624 648 734 790,r 684 716 774 774,r 792 800 940 944,g 864 908 934 934,r 840 902 922 968,g 922 954 962 1024,r 992 1022 1070 1092,g 844 1036 1102 1106,
r 856 902 914 970,r 906 944 1014 1060,r 1014 1062 1090 1160,r 950 1044 1044 1092,g 1022 1054 1088 1116,g 982 1030 1042 1048,r 990 1012 1050 1100,g 1046 1066 1104 1138,g 930 954 1088 1100,r 966 974 1006 1020,
g 962 990 1022 1060,r 986 986 1016 1016`;

draw('daily', [26, 36, 1362, 1356],
    bars(daily, 45, 10.94, 7) +
    poly('ema', '45,698 60,685 80,655 95,635 110,605 125,593 150,588 180,596 220,604 245,598 280,608 330,613 380,610 410,580 440,571 480,576 500,570 530,542 555,522 585,483 620,479 660,465 700,435 740,412 790,385 840,340 890,312 920,330 960,350 985,372 1040,402 1080,455 1120,490 1145,505 1175,540 1200,590 1240,665 1290,750 1335,815') +
    hline('level', 28, 1382, 291) + hline('cross', 28, 1388, 942) + vline('cross', 1369, 40, 1392),
    [['164.00', 120], ['163.00', 275], ['162.00', 429], ['161.00', 585], ['160.00', 738], ['159.00', 892], ['158.00', 1048], ['157.00', 1201],
        ['159.30', 840, 'avg'], ['158.69', 936, 'last'], ['158.23', 1012, 'last']],
    [['162.89', 320, 'green'], ['EMA', 843]]);

document.getElementById('dates').innerHTML = [['Sep', 57, 1], ['13', 143], ['Oct', 286, 1], ['12', 374], ['Nov', 525, 1], ['13', 612], ['Dec', 766, 1], ['13', 853], ['2018', 974, 1], ['15', 1072], ['Feb', 1214, 1]]
    .map(([t, x, m]) => `<span class="${m ? 'month' : ''}" style="left:${((x - 26) / 15.1).toFixed(2)}%">${t}</span>`).join('') +
    '<span class="today">Wed 2018-02-21</span>';

// ---- #3 30 min ----
const half = `r 550 564 644 654,r 628 643 643 682,g 628 644 656 668,r 669,g 606 606 644 720,r 592 606 710 756,r 682 710 734 756,r 642 732 826 846,r 826 838 878 886,g 796 826 878 886,
g 786 786 826 886,r 710 798 904 904,g 834 889 889 926,g 798 836 878 898,r 812 840 916 964,g 840 900 916 940,r 900 900 958 1056,r 954 964 1006 1030,g 990 990 1020 1056,g 926 992 992 1018,
g 954 980 980 1018,g 900 914 994 1030,g 888 900 916 976,g 888 902 902 940,r 874 900 958 958,r 942 956 980 990,g 940 956 966 966,g 914 914 966 966,r 928 929 929 940,g 888 915 915 916,
r 902 902 916 926,g 860 888 916 926,-,r 1018 1058 1200 1200,r 1188 1196 1316 1352,g 1236 1304 1316 1406,g 1174 1210 1306 1306,r 1092 1196 1226 1226,g 1094 1134 1226 1290,g 940 964 1136 1146,
r 900 978 1006 1018,g 900 956 996 1006,r 914 942 1032 1092,r 964 1030 1110 1110,g 1018 1018 1110 1120,g 900 914 1020 1030,g 812 860 916 926,g 564 656 864 864,r 592 656 710 744,r 656 696 800 810,
r 730 798 828 860,r 744 826 904 904,g 860 874 890 926,g 848 848 890 926,g 838 848 862 874,g 810 826 864 874,r 812 826 864 864,g 784 798 850 850,g 730 758 786 796,g 668 722 760 770,
r 712 722 814 814,g 786,g 578 616 746 784,r 606 606 684 744,g 346 346 684 692,g 202 292 346 372,r 176 292 334 372,g 256 280 346 380,r 228 280 346 372,g 292 334 346 372,
g 256 306 320 358,r 306 306 334 372,r 320 334 374 406,r 334 382 450 460,g 382 436 450 450,r 396 436 450 510,r 374 450 568 578,g 512 524 568 628,r 498 526 596 710,r 578 592 656 656,
r 578 642 656 692,g 614 642 656 710,g 606 606 644 654,r 552 614 642 668,g 578 592 656 656,r 564 578 630 630,r 488 628 654 654,r 712 722 876 886,r 860 876 966 1016,r 942 964 980 1056,
r 979`;

draw('half', [26, 40, 1354, 1394],
    bars(half, 45, 14.59, 7) +
    poly('ema', '45,894 70,872 95,848 130,826 155,826 170,831 200,826 240,835 280,848 340,880 385,887 430,898 520,904 545,940 590,990 605,997 660,997 690,1006 720,992 755,950 810,933 870,915 935,885 970,857 1000,790 1040,715 1070,670 1100,638 1140,607 1175,601 1215,603 1240,607 1300,611 1318,625 1334,653') +
    poly('dn', '45,1109 130,1083 200,1072 270,1064 320,1063 380,1055 430,1052 500,1045 540,1048 580,1055 700,1053 760,1041 830,1032 900,1022 970,1007 1050,973 1095,953 1150,931 1230,912 1290,902 1360,902') +
    hline('level', 28, 1376, 710) + hline('cross', 28, 1380, 396) + vline('cross', 1096, 45, 1434),
    [['158.90', 115], ['158.80', 244], ['158.60', 500], ['158.50', 630], ['158.40', 760], ['158.30', 889], ['158.20', 1020], ['158.10', 1150], ['158.00', 1279], ['157.90', 1410],
        ['158.68', 392, 'last'], ['158.46', 683, 'avg'], ['158.23', 979, 'last']],
    [['EMA', 685]]);

// ---- #1 3 min, prices in ticks above 158.00 ----
const three = `-,-,-,-,-,-,-,-,-,-,-,-,-,-,-,-,-,-,-,-,-,-,r 70 69 68 66,-,-,-,-,-,r 70 69 68 66,r 70 66 64 63,
g 66 65 64 64,g 70 66 65 65,g 70 70 66 65,r 70 69 68 66,g 70 70 66 66,r 70 70 65 64,g 70 70 64 64,-,r 70 69 68 65,r 70 70 65 64,
r 70 65 65 65,g 70 66 65 65,g 70 66 65 64,r 66 66 64 62,r 64 64 61 61,g 62 62 61 59,r 63 62 61 60,g 62 62 60 59,r 64 61 61 61,g 64 64 61 61,
g 70 70 64 63,r 70 70 64 63,r 64 64 63 62,g 64 64 63 62,g 70 70 64 64,-,r 70 69 68 66,r 70 70 65 65,r 66 65 61 60,r 61 60 55 54,
r 57 55 52 51,r 57 53 52 51,r 54 52 52 50,g 54 53 52 51,g 55 54 52 52,r 55 55 53 50,r 54 53 52 52,r 53 52 51 50,g 57 56 52 52,g 59 58 56 55,
g 60 59 58 55,r 59 59 56 55,r 56 56 55 54,r 55 55 47 46,r 50 48 47 47,g 51 48 48 46,g 49 49 47 44,g 51 50 49 48,g 54 52 50 50,g 53 53 53 52,
g 53 53 53 49,r 54 53 52 52,g 54 54 52 49,r 53 53 53 51,r 53 53 51 51,r 51 51 50 49,r 51 51 49 48,g 53 51 50 49,r 53 51 49 49,r 51 49 48 48,
g 51 50 49 47,g 51 51 50 49,r 52 51 49 49,g 53 52 50 48,r 54 53 51 50,r 51 50 50 48,r 51 50 50 49,r 51 50 48 48,r 50 48 47 47,g 48 48 48 45,
r 49 48 46 46,r 47 46 46 45,g 47 46 45 44,g 48 47 47 45,g 51 50 47 47,r 51 50 48 47,g 50 49 48 47,g 51 50 49 48,r 50 50 49 47,r 50 49 49 48,
r 49,r 49 49 49 48,g 52 51 50 50,r 52 52 50 49,g 52 52 50 50,r 52 52 51 50,r 50 50 49 49,g 52 52 49 49,r 52 51 51 50,g 52 52 51 49,
g 53 52 51 51,g 54 54 53 53,g 56 55 54 54,r 55 54 53 53,r 54 53 53 52,r 54 54 53 53,r 54 54 51 51,r 51 51 49 49,g 51 50 49 49,r 51 50 49 47,
g 49 49 48 48,g 50 50 50 49,g 50,r 51 51 50 50,g 51 51 51 50,g 52 52 51 50,r 53 52 51 51,g 53 52 52 52,g 54 54 53 53,r 54 54 53 53,
g 54 54 54 53,g 55 54 54 54,r 54 54 53 53,r 53 53 53 52,g 54 54 53 53,g 54 54 54 53,r 55 55 53 53,r 53 53 52 52,r 53 53 51 51,r 52 52 50 50,
g 54 51 50 46,g 56 56 51 49,g 61 60 56 56,r 60 60 58 58,r 58 57 57 56,r 58 57 57 56,r 57 57 55 54,r 56 55 54 54,r 54 54 48 48,r 48 48 44 44,
r 44 43 39 39,r 40 39 38 35,g 40 39 38 36,r 39 38 38 37,g 42 41 38 38,r 41 40 37 36,r 38 36 36 35,r 37 37 33 33,r 34 33 31 31,r 32 31 31 30,
r 32 31 28 28,r 29 29 25 25,r 25 25 21 21,g 25 25 21 21,r 24 24 22 22,g 24 24 22 21,g 26 24 24 23,g 27 26 25 24,g 29 27 26 26,r 28 28 24 24,
r 25 24 21 21,-,-,g 21,g 24 22 21 21,r 23 23 22 21,r 24 22 22 22,r 22 21 21 21,g 23 22 21 21,g 26 23 22 22,g 23`;
const tick = v => 288 + (60 - v) * 31.9;

draw('three', [12, 15, 2957, 1523],
    `<defs><clipPath id="below"><rect x="12" y="68" width="2957" height="1470"/></clipPath></defs><g clip-path="url(#below)">` +
    bars(three, 29, 15.365, 6, tick) +
    poly('dn', '29,459 90,437 165,408 230,387 300,367 380,350 460,331 550,317 640,303 700,297 770,296 850,287 890,281 945,282 1000,292 1075,303 1140,304 1200,321 1300,332 1400,349 1500,365 1553,376 1623,394 1703,405 1803,418 1873,424 1943,427 2043,440 2133,448 2238,449 2343,455 2453,453 2503,465 2573,487 2633,514 2703,552 2773,593 2853,646 2951,697') +
    poly('ema', '740,68 770,90 800,90 850,103 880,96 910,96 930,115 960,160 1000,215 1030,245 1065,283 1080,291 1107,293 1140,305 1155,330 1180,365 1210,395 1245,413 1300,430 1360,467 1412,496 1460,512 1500,523 1553,549 1613,585 1673,597 1723,605 1783,605 1853,598 1923,577 1963,569 1993,573 2033,584 2123,584 2173,571 2203,560 2243,556 2288,545 2323,547 2343,552 2383,520 2428,500 2448,502 2473,525 2503,570 2553,635 2583,678 2623,750 2653,815 2693,905 2733,985 2783,1053 2833,1150 2873,1200 2916,1249') +
    '</g>' + hline('cross', 12, 2969, 36) + vline('cross', 230, 22, 1538),
    [['158.64', 161], ['158.60', 289], ['158.56', 416], ['158.52', 545], ['158.48', 674], ['158.44', 800], ['158.40', 928], ['158.36', 1055], ['158.32', 1184], ['158.28', 1312], ['158.24', 1438],
        ['158.68', 34, 'last'], ['158.29', 1274, 'avg'], ['158.23', 1471, 'last']],
    [['EMA', 1276]]);

// ---- commodity channel index, 50 and 14 periods ----
const slow = [452, 463, 428, 478, 428, 502, 502, 467, 447, 484, 484, 500, 538, 520, 503, 518, 555, 690, 720, 668, 625, 690, 747, 626, 642, 525, 518, 518, 630, 742,
    700, 645, 605, 574, 574, 614, 560, 533, 565, 584, 560, 553, 553, 583, 628, 643, 632, 624, 593, 570, 493, 497, 558, 545, 467, 432, 436, 463, 555, 725,
    792, 762, 762, 716, 670, 670, 649, 655, 590, 533, 518, 535, 556, 630, 640, 620, 625, 583, 543, 528, 538, 518, 523, 518, 523, 535, 544, 518, 530, 544,
    532, 519, 518, 505, 493, 517, 513, 520, 535, 550, 553, 573, 579, 560, 503, 513, 513, 484, 508, 498, 492, 503, 418, 442, 402, 413, 472, 408, 402, 397,
    325, 240, 173, 255, 296, 286, 350, 467, 447, 492, 508, 458, 438, 418, 398, 360, 349, 312, 255, 281, 275, 256, 315, 342, 305, 310, 316, 372, 405, 450,
    462, 305, 97, 145, 224, 238, 312, 335, 545, 710, 845, 893, 820, 783, 694, 718, 724, 724, 724, 705, 694, 700, 716, 675, 657, 635, 605, 587, 568, 575,
    590, 604, 595, 573, 553, 547, 542, 542, 536, 522, 522];

const fast = [1397, 1428, 1377, 1455, 1382, 1465, 1475, 1410, 1357, 1423, 1412, 1462, 1520, 1500, 1407, 1447, 1500, 1560, 1540, 1490, 1438, 1463, 1510, 1410, 1422, 1317, 1306, 1296, 1430, 1540,
    1520, 1460, 1415, 1382, 1390, 1453, 1385, 1338, 1397, 1440, 1395, 1378, 1397, 1490, 1540, 1560, 1520, 1490, 1455, 1393, 1276, 1276, 1378, 1358, 1213, 1186, 1215, 1270, 1380, 1500,
    1600, 1560, 1520, 1470, 1438, 1438, 1423, 1433, 1380, 1322, 1287, 1292, 1315, 1470, 1560, 1540, 1510, 1440, 1357, 1343, 1363, 1343, 1347, 1332, 1337, 1387, 1402, 1332, 1378, 1450,
    1461, 1397, 1408, 1325, 1281, 1423, 1387, 1463, 1540, 1560, 1560, 1560, 1540, 1450, 1317, 1343, 1337, 1276, 1317, 1287, 1281, 1302, 1175, 1227, 1180, 1227, 1354, 1236, 1250, 1267,
    1215, 1135, 1083, 1213, 1267, 1262, 1345, 1480, 1447, 1475, 1490, 1432, 1412, 1395, 1380, 1345, 1310, 1250, 1181, 1201, 1201, 1201, 1256, 1307, 1262, 1272, 1281, 1400, 1480, 1520,
    1480, 1280, 993, 1090, 1220, 1250, 1310, 1335, 1480, 1600, 1600, 1600, 1540, 1475, 1438, 1443, 1443, 1455, 1470, 1490, 1480, 1490, 1500, 1500, 1480, 1460, 1427, 1392, 1362, 1392,
    1463, 1520, 1500, 1470, 1367, 1373, 1350, 1392, 1355, 1303, 1318];

const series = a => poly('ema', a.map((y, i) => `${(30 + i * 15.37).toFixed(0)},${y}`).join(' '));

draw('slow', [12, 10, 2957, 895],
    series(slow) + hline('dn', 28, 2951, 316) + hline('dn', 28, 2951, 553) + hline('zero', 28, 2951, 437) + vline('cross', 230, 10, 905),
    [['300.00', 84], ['200.00', 200], ['100.00', 317], ['0.00', 437], ['-100.00', 554], ['-200.00', 671], ['-300.00', 787], ['-400.00', 905], ['-75.74', 519, 'study']]);

draw('fast', [12, 905, 2957, 562],
    series(fast) + hline('dn', 28, 2951, 1231) + hline('dn', 28, 2951, 1464) + hline('zero', 28, 2951, 1348) + vline('cross', 230, 905, 1467),
    [['300.00', 999], ['200.00', 1115], ['100.00', 1232], ['0.00', 1352], ['-100.00', 1464], ['21.61', 1318, 'study']]);
```
